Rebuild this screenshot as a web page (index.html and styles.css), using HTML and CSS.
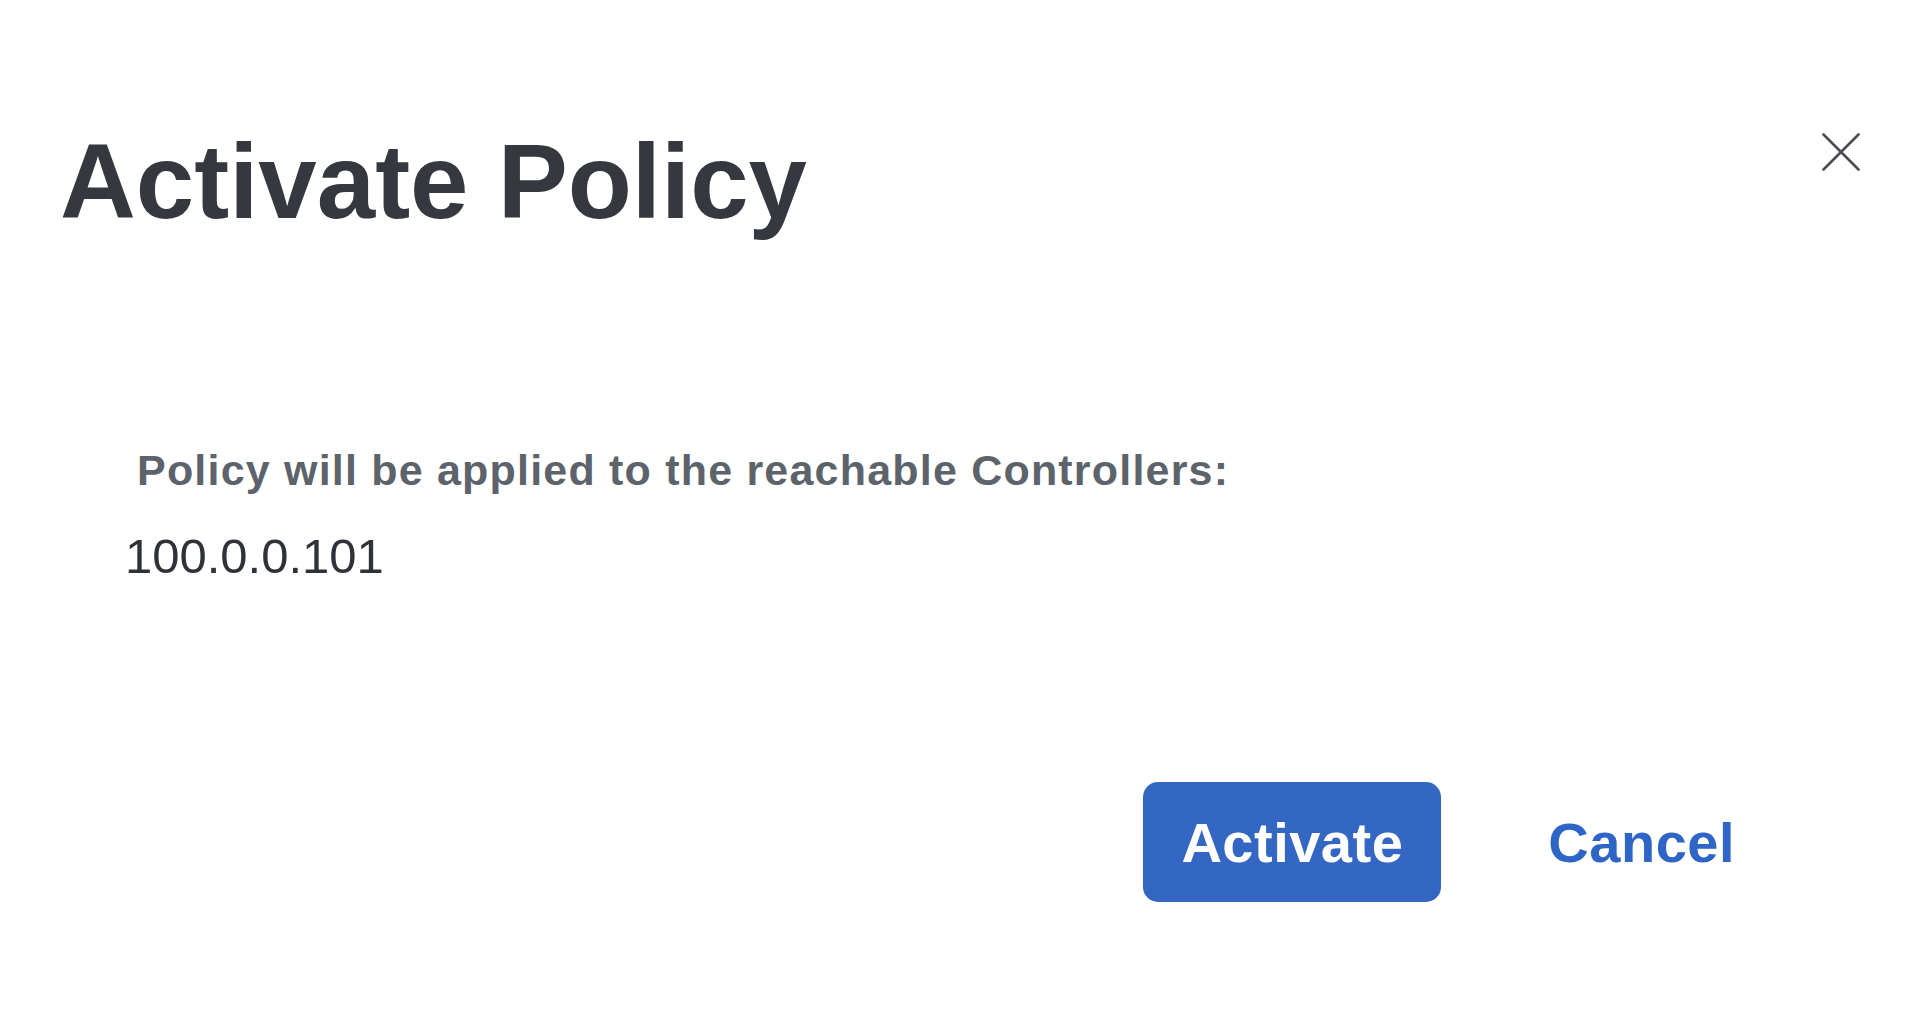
FILE: index.html
```html
<!DOCTYPE html>
<html lang="en">
<head>
<meta charset="utf-8">
<title>Activate Policy</title>
<link rel="stylesheet" href="styles.css">
</head>
<body>
<div class="dialog">
  <header class="dialog-header">
    <h1 class="dialog-title">Activate Policy</h1>
    <button class="close-btn" aria-label="Close">
      <svg width="38" height="38" viewBox="0 0 38 38"><path d="M1.5 1.5 L36.5 36.5 M36.5 1.5 L1.5 36.5" stroke="#4a4d52" stroke-width="2.6" stroke-linecap="round" fill="none"/></svg>
    </button>
  </header>
  <section class="dialog-body">
    <p class="subtitle">Policy will be applied to the reachable Controllers:</p>
    <p class="controller">100.0.0.101</p>
  </section>
  <footer class="dialog-footer">
    <button class="btn-primary">Activate</button>
    <button class="btn-link">Cancel</button>
  </footer>
</div>
</body>
</html>
```
FILE: styles.css
```css
html, body {
  margin: 0;
  padding: 0;
  background: #ffffff;
}
body {
  width: 1916px;
  height: 1032px;
  overflow: hidden;
  font-family: "Liberation Sans", Arial, sans-serif;
}
.dialog {
  display: flex;
  flex-direction: column;
}
.dialog-header {
  display: flex;
  justify-content: space-between;
  align-items: flex-start;
  padding: 122px 56px 0 60px;
}
.dialog-title {
  margin: 0;
  font-size: 105px;
  line-height: 120px;
  font-weight: 700;
  color: #35383e;
}
.close-btn {
  margin-top: 11px;
  padding: 0;
  border: 0;
  background: none;
  width: 38px;
  height: 38px;
  display: flex;
}
.dialog-body {
  padding-top: 204px;
}
.subtitle {
  margin: 0;
  padding-left: 137px;
  font-family: "Liberation Sans", Arial, sans-serif;
  font-size: 43px;
  line-height: 48px;
  font-weight: 700;
  letter-spacing: 1.2px;
  color: #5d636b;
}
.controller {
  margin: 32px 0 0;
  padding-left: 125px;
  font-size: 49px;
  line-height: 60px;
  font-weight: 400;
  color: #2f3237;
}
.dialog-footer {
  display: flex;
  justify-content: flex-end;
  align-items: center;
  margin-top: 196px;
  padding-right: 181px;
}
.btn-primary {
  height: 120px;
  width: 298px;
  border: 0;
  border-radius: 15px;
  background: #3467c3;
  color: #ffffff;
  font-family: "Liberation Sans", Arial, sans-serif;
  font-size: 56px;
  letter-spacing: 0.5px;
  font-weight: 700;
  padding: 0;
}
.btn-link {
  margin-left: 107px;
  border: 0;
  background: none;
  padding: 0;
  color: #2e65c6;
  font-family: "Liberation Sans", Arial, sans-serif;
  font-size: 56px;
  letter-spacing: 0.5px;
  font-weight: 700;
}
```
